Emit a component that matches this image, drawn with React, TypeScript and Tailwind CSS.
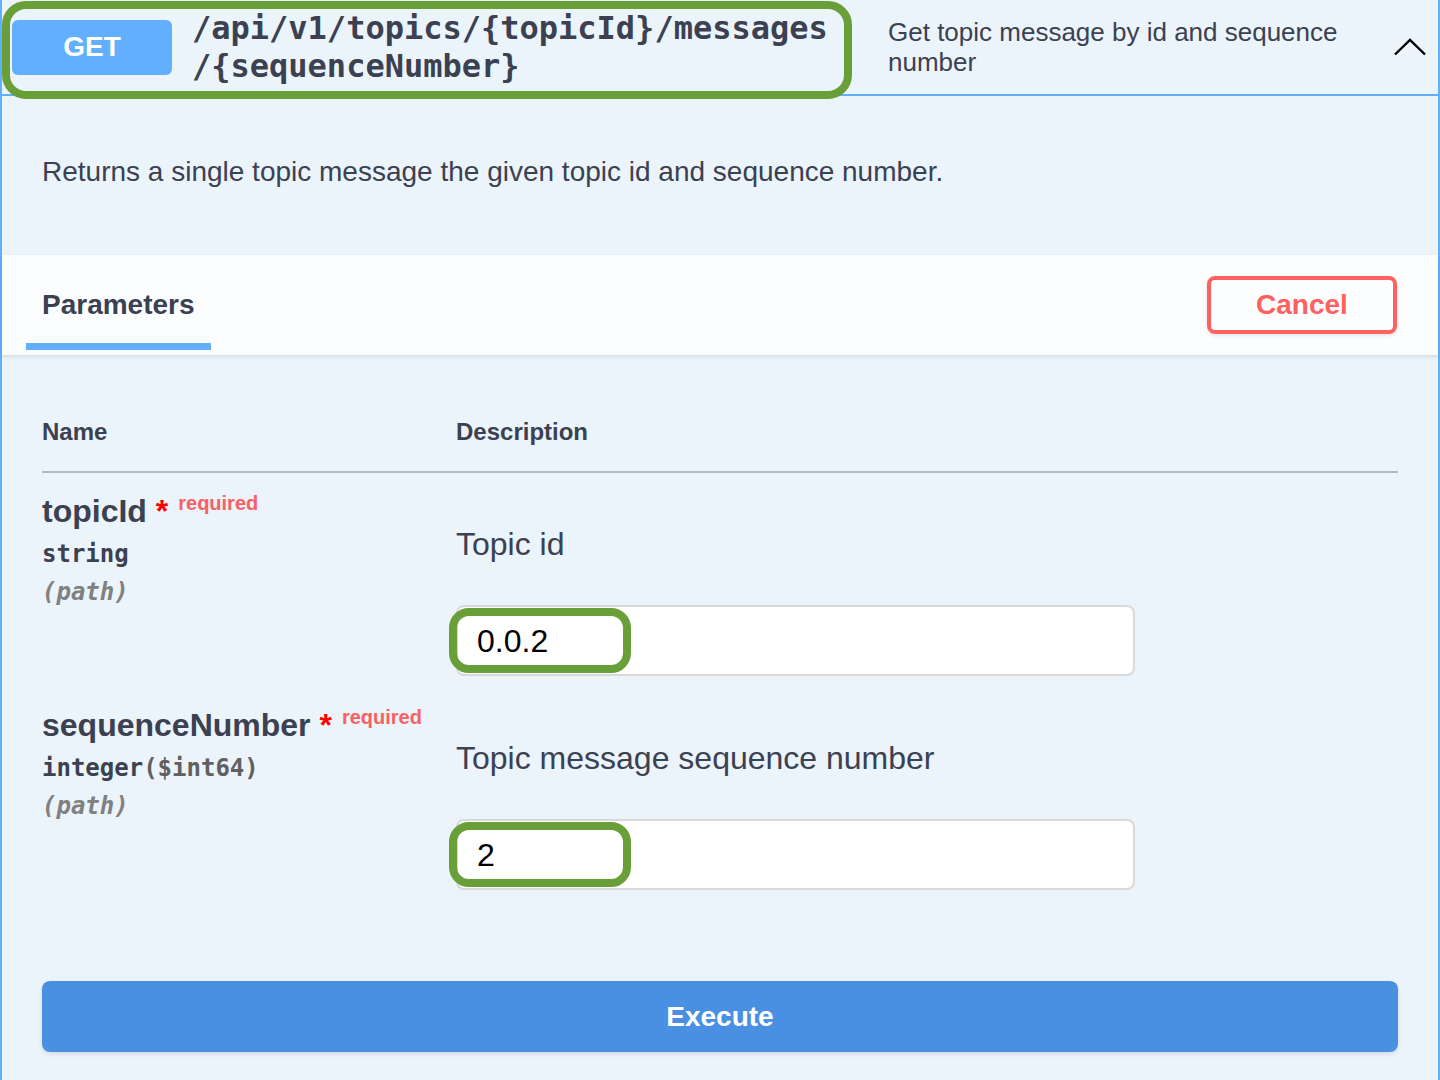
const sans = "font-['Liberation_Sans',Arial,sans-serif]";
const mono = "font-['DejaVu_Sans_Mono',monospace]";

function Required() {
    return (
        <>
            <span className="text-[#ff0000] font-bold"> *</span>
            <span className="relative -top-[12px] px-[10px] text-[20px] font-bold text-[#f76164]">required</span>
        </>
    );
}

function ParamRow({ name, type, format, description, value }: { name: string; type: string; format?: string; description: string; value: string }) {
    return (
        <div className="flex h-[214px]">
            <div className="w-[414px] pt-[18px]">
                <div className="text-[32px] leading-[40px] font-bold text-[#3b4151] whitespace-nowrap">
                    {name}
                    <Required />
                </div>
                <div className={`${mono} text-[24px] leading-[38px] font-bold text-[#3b4151]`}>
                    {type}
                    {format && <span className="text-[#606060]">{format}</span>}
                </div>
                <div className={`${mono} text-[24px] leading-[38px] font-bold italic text-[#808080]`}>(path)</div>
            </div>
            <div className="flex-1 pt-[51px]">
                <div className="text-[32px] leading-[40px] text-[#3b4151]">{description}</div>
                <div className="relative mt-[41px] w-[679px] h-[71px] rounded-[8px] border-2 border-[#d9d9d9] bg-white flex items-center pl-[19px]">
                    <span className="text-[32px] text-black">{value}</span>
                    <div className="absolute -left-[9px] top-[1px] w-[182px] h-[65px] rounded-[20px] border-[8px] border-[#689f38]" />
                </div>
            </div>
        </div>
    );
}

export default function App() {
    return (
        <div className={`${sans} relative min-h-[1080px] w-[1440px] bg-[#ebf3fb] border-x-2 border-[#61affe] text-[#3b4151]`}>
            {/* summary bar */}
            <div className="flex items-center h-[96px] border-b-2 border-[#61affe] pl-[10px] pr-[12px]">
                <div className="w-[160px] h-[55px] rounded-[6px] bg-[#61affe] text-white text-[28px] font-bold flex items-center justify-center">
                    GET
                </div>
                <div className={`${mono} ml-[20px] w-[676px] text-[32px] leading-[38px] font-bold`}>
                    <div>/api/v1/topics/{"{topicId}"}/messages</div>
                    <div>/{"{sequenceNumber}"}</div>
                </div>
                <div className="flex-1 pl-[20px] pr-[40px] text-[26px] leading-[30px]">
                    Get topic message by id and sequence number
                </div>
                <svg width="32" height="18" viewBox="0 0 32 18" fill="none" className="shrink-0">
                    <polyline points="1,16.5 16,2 31,16.5" stroke="#000" strokeWidth="2.4" />
                </svg>
            </div>
            <div className="absolute left-[0px] top-[1px] w-[850px] h-[98px] rounded-[24px] border-[8px] border-[#689f38]" />

            {/* description */}
            <div className="pt-[60px] pb-[67px] px-[40px] text-[28px] leading-[32px]">
                Returns a single topic message the given topic id and sequence number.
            </div>

            {/* parameters header */}
            <div className="flex justify-between h-[100px] pl-[24px] pr-[41px] bg-[#fbfdff] shadow-[0_2px_4px_rgba(0,0,0,0.1)]">
                <div className="self-start mt-[34px] px-[16px] pb-[22px] border-b-[7px] border-[#61affe] text-[28px] leading-[32px] font-bold">
                    Parameters
                </div>
                <button className="self-center w-[190px] h-[58px] rounded-[8px] border-4 border-[#ff6060] text-[#ff6060] text-[28px] font-bold shadow-[0_2px_4px_rgba(0,0,0,0.1)]">
                    Cancel
                </button>
            </div>

            {/* table */}
            <div className="px-[40px]">
                <div className="flex pt-[62px] pb-[24px] border-b-2 border-[#b0b7c3] text-[24px] leading-[30px] font-bold">
                    <div className="w-[414px]">Name</div>
                    <div>Description</div>
                </div>
                <ParamRow name="topicId" type="string" description="Topic id" value="0.0.2" />
                <ParamRow name="sequenceNumber" type="integer" format="($int64)" description="Topic message sequence number" value="2" />
                <button className="mt-[80px] w-full h-[71px] rounded-[8px] bg-[#4990e2] text-white text-[28px] font-bold shadow-[0_2px_4px_rgba(0,0,0,0.1)]">
                    Execute
                </button>
            </div>
        </div>
    );
}
